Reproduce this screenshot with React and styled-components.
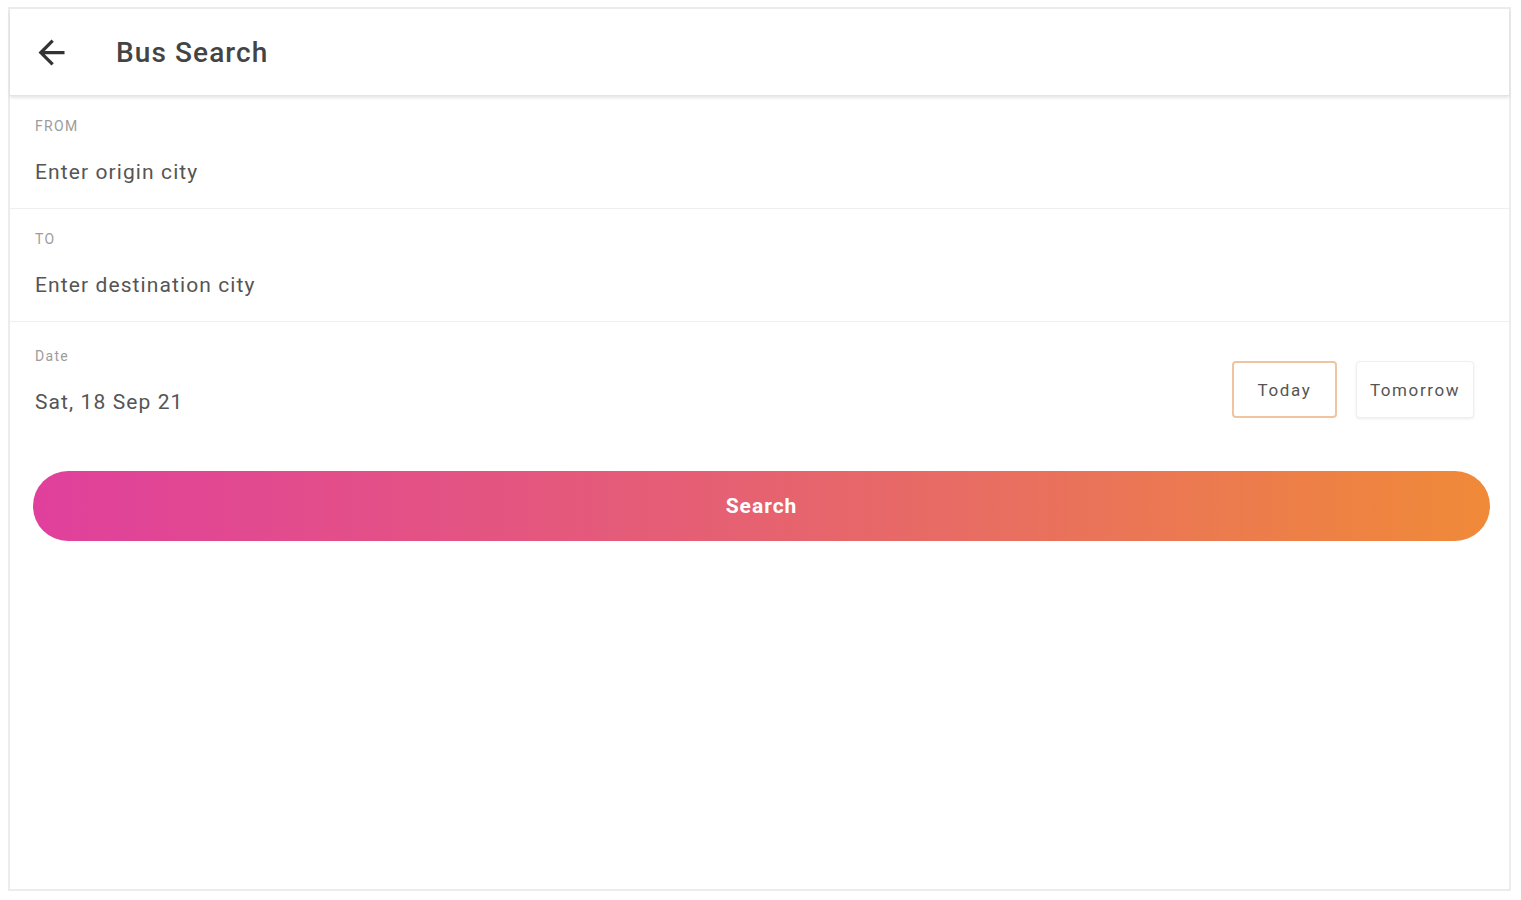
import React from 'react'
import styled, { createGlobalStyle } from 'styled-components'

const GlobalStyle = createGlobalStyle`
  html, body {
    margin: 0;
    padding: 0;
    background: #fff;
    font-family: Roboto, "Liberation Sans", Arial, sans-serif;
  }
  * { box-sizing: border-box; }
`

const Frame = styled.div`
  margin: 7px 10px 0 8px;
  height: 884px;
  border: 2px solid #ececec;
  display: flex;
  flex-direction: column;
  background: #fff;
`

const Header = styled.header`
  height: 87px;
  display: flex;
  align-items: center;
  padding-left: 22px;
  gap: 45px;
  border-bottom: 1px solid #e4e4e4;
  box-shadow: 0 2px 3px rgba(0, 0, 0, 0.1);
  position: relative;
  z-index: 1;
`

const BackButton = styled.button`
  background: none;
  border: none;
  padding: 0;
  display: flex;
  color: #333;
  cursor: pointer;
  svg {
    width: 39px;
    height: 39px;
  }
`

const Title = styled.h1`
  margin: 0;
  font-size: 28px;
  font-weight: 500;
  color: #444;
  letter-spacing: 1.1px;
`

const Field = styled.div`
  padding: ${p => (p.$date ? '26px 35px 0 25px' : '22px 35px 22px 25px')};
  border-bottom: ${p => (p.$date ? 'none' : '1px solid #efefef')};
  display: flex;
  align-items: flex-start;
  justify-content: space-between;
`

const FieldText = styled.div`
  display: flex;
  flex-direction: column;
  gap: 24px;
`

const Label = styled.span`
  font-size: 14px;
  line-height: 16px;
  color: #9c9c9c;
  letter-spacing: 1.3px;
  text-transform: ${p => (p.$caps ? 'uppercase' : 'none')};
`

const Value = styled.span`
  font-size: 21px;
  line-height: 28px;
  color: #555;
  letter-spacing: 1.1px;
`

const DayButtons = styled.div`
  display: flex;
  gap: 19px;
  margin-top: 13px;
`

const DayButton = styled.button`
  height: 57px;
  padding: 0 ${p => (p.$active ? '20px' : '10px')};
  min-width: ${p => (p.$active ? '105px' : '118px')};
  background: #fff;
  border: ${p => (p.$active ? '2px solid #efc49e' : '1px solid #efefef')};
  border-radius: 4px;
  box-shadow: ${p => (p.$active ? 'none' : '0 1px 3px rgba(0,0,0,0.08)')};
  font-family: inherit;
  font-size: 17px;
  letter-spacing: 1.6px;
  color: #555;
  cursor: pointer;
`

const SearchButton = styled.button`
  margin: 53px 19px 0 23px;
  height: 70px;
  border: none;
  border-radius: 35px;
  background: linear-gradient(90deg, #e0409c 0%, #e4577e 35%, #e86d62 65%, #f08a38 100%);
  color: #fff;
  font-family: inherit;
  font-size: 21px;
  font-weight: 700;
  letter-spacing: 1px;
  cursor: pointer;
`

function BackIcon() {
  return (
    <svg viewBox="0 0 24 24" fill="currentColor">
      <path d="M20 11H7.83l5.59-5.59L12 4l-8 8 8 8 1.41-1.41L7.83 13H20v-2z" />
    </svg>
  )
}

export default function App() {
  return (
    <>
      <GlobalStyle />
      <Frame>
        <Header>
          <BackButton aria-label="Back"><BackIcon /></BackButton>
          <Title>Bus Search</Title>
        </Header>
        <Field>
          <FieldText>
            <Label $caps>From</Label>
            <Value>Enter origin city</Value>
          </FieldText>
        </Field>
        <Field>
          <FieldText>
            <Label $caps>To</Label>
            <Value>Enter destination city</Value>
          </FieldText>
        </Field>
        <Field $date>
          <FieldText>
            <Label>Date</Label>
            <Value>Sat, 18 Sep 21</Value>
          </FieldText>
          <DayButtons>
            <DayButton $active>Today</DayButton>
            <DayButton>Tomorrow</DayButton>
          </DayButtons>
        </Field>
        <SearchButton>Search</SearchButton>
      </Frame>
    </>
  )
}
